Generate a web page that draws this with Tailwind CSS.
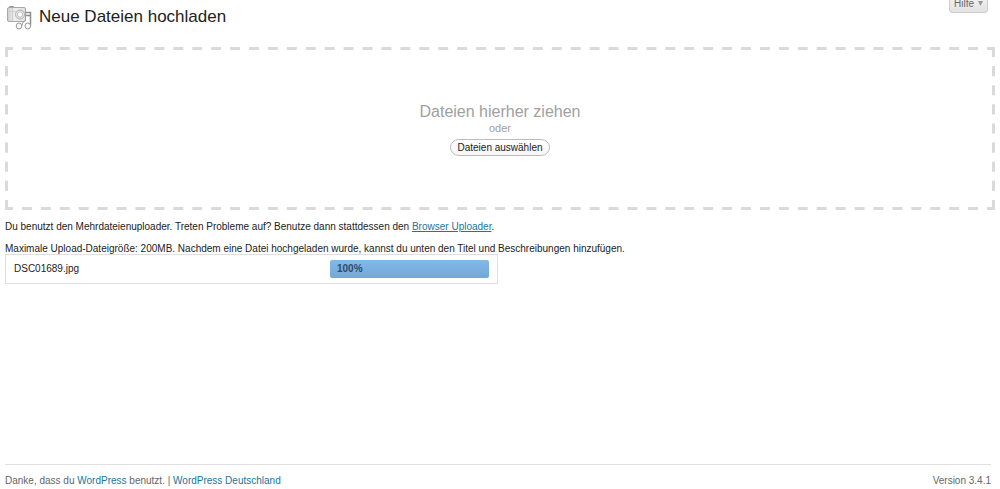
<!DOCTYPE html>
<html lang="de">
<head>
<meta charset="utf-8">
<meta name="viewport" content="width=device-width, initial-scale=1">
<title>Neue Dateien hochladen</title>
<script src="https://cdn.jsdelivr.net/npm/@tailwindcss/browser@4"></script>
</head>
<body class="flex min-h-screen flex-col bg-white px-[5px] font-['Liberation_Sans',Arial,sans-serif] text-[10px] leading-[14px] text-[#222]">
<header class="flex h-[47px] items-start justify-between">
  <div class="flex items-start gap-2 pt-[4px]">
    <svg class="h-[28px] w-[27px]" viewBox="0 0 27 28" fill="none" aria-hidden="true">
      <defs><linearGradient id="cam" x1="0" y1="0" x2="1" y2="0"><stop stop-color="#cfcfcf"/><stop offset=".4" stop-color="#efefef"/><stop offset="1" stop-color="#e2e2e2"/></linearGradient></defs>
      <path d="M4.500 3V2.500h4V3" stroke="#999"/>
      <rect x="2.500" y="3.500" width="18" height="14" rx="1.500" fill="url(#cam)" stroke="#a8a8a8"/>
      <path d="M3 7.500h17M7.500 4v13" stroke="#d0d0d0"/>
      <path d="M20.500 8.500h5v13M20.500 11.500h5" stroke="#8e8e8e" stroke-width="1.500"/>
      <path d="M20.500 8.500v8q-3 .5-3.500 5" stroke="#a0a0a0"/>
      <circle cx="15" cy="10.500" r="4.500" fill="#e8e8e8" stroke="#b0b0b0"/>
      <circle cx="15" cy="10.500" r="2.700" fill="#fcfcfc" stroke="#c0c0c0"/>
      <ellipse cx="14" cy="22" rx="2.800" ry="3" fill="#fafafa" stroke="#999"/>
      <ellipse cx="22.800" cy="22" rx="2.800" ry="3" fill="#fafafa" stroke="#999"/>
    </svg>
    <h1 class="-ml-px text-[17px] leading-[26px]">Neue Dateien hochladen</h1>
  </div>
  <button type="button" class="mr-[7px] flex h-[13px] w-[39px] items-end justify-center gap-1 rounded-b border border-t-0 border-[#ccc] bg-linear-to-b from-[#eee] to-[#e3e3e3] pb-[2px] text-[10px] leading-[12px] text-[#666]">Hilfe
    <svg class="mb-[4px] h-[5px] w-[5px]" viewBox="0 0 5 5" aria-hidden="true"><path d="M0 0h5L2.500 5z" fill="#999"/></svg>
  </button>
</header>
<main class="flex-1">
  <section class="relative flex h-[163px] flex-col items-center pt-[55px] text-[#a0a0a0]">
    <svg class="absolute inset-0 h-full w-full" stroke="#dadada" stroke-width="6" aria-hidden="true">
      <line x1="0" y1="0" x2="100%" y2="0" pathLength="994" stroke-dasharray="10 9" stroke-dashoffset="2"/>
      <line x1="0" y1="100%" x2="100%" y2="100%" pathLength="994" stroke-dasharray="10 9" stroke-dashoffset="2"/>
      <line x1="0" y1="0" x2="0" y2="100%" pathLength="162" stroke-dasharray="10 9"/>
      <line x1="100%" y1="0" x2="100%" y2="100%" pathLength="162" stroke-dasharray="10 9"/>
    </svg>
    <p class="text-[16px] leading-[19px]">Dateien hierher ziehen</p>
    <p class="text-[11px] leading-[14px]">oder</p>
    <button type="button" class="relative mt-1 h-[17px] rounded-full border border-[#bbb] bg-linear-to-b from-white to-[#f6f6f6] px-[6px] text-[10px] leading-[15px] text-[#222]">Dateien auswählen</button>
  </section>
  <p class="mt-[10px]">Du benutzt den Mehrdateienuploader. Treten Probleme auf? Benutze dann stattdessen den <a href="#" class="text-[#21759b] underline">Browser Uploader</a>.</p>
  <p class="mt-2">Maximale Upload-Dateigröße: 200MB. Nachdem eine Datei hochgeladen wurde, kannst du unten den Titel und Beschreibungen hinzufügen.</p>
  <div class="-mt-0.5 flex h-[30px] w-full max-w-[493px] items-center justify-between border border-[#dfdfdf] px-2">
    <span id="file-name">DSC01689.jpg</span>
    <div role="progressbar" aria-labelledby="file-name" aria-valuemin="0" aria-valuemax="100" aria-valuenow="100" class="h-[18px] w-[159px] rounded-[2px] bg-linear-to-b from-[#83b9e8] to-[#72a7d8] px-[7px] leading-[18px] font-bold text-[#2f4c68]">100%</div>
  </div>
</main>
<footer class="mr-1 flex h-[25px] items-end justify-between border-t border-[#dfdfdf] pb-px text-[#666]">
  <p>Danke, dass du <a href="#" class="text-[#21759b]">WordPress</a> benutzt. | <a href="#" class="text-[#21759b]">WordPress Deutschland</a></p>
  <p>Version 3.4.1</p>
</footer>
</body>
</html>
